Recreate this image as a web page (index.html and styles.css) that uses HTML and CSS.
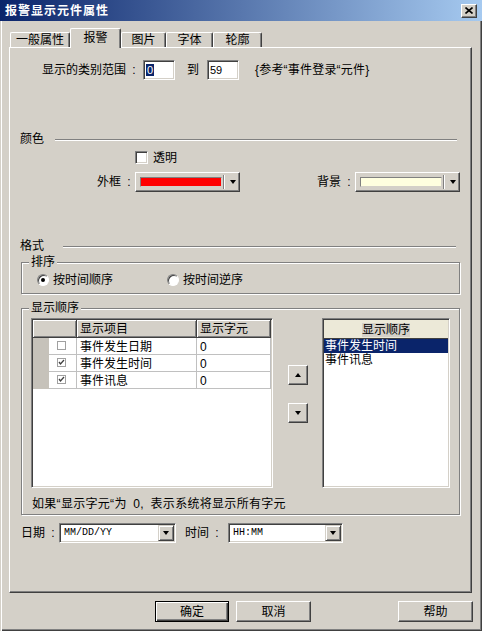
FILE: index.html
```html
<!DOCTYPE html>
<html lang="zh-CN">
<head>
    <meta charset="UTF-8">
    <meta name="viewport" content="width=device-width, initial-scale=1.0">
    <title>报警显示元件属性</title>
    <link rel="stylesheet" href="styles.css">
</head>
<body>
    <div class="window">
        <div class="titlebar">
            <span class="title">报警显示元件属性</span>
            <span class="close-btn">
                <svg width="8" height="7" viewBox="0 0 8 7"><path d="M0.5 0.5 L7.5 6.5 M7.5 0.5 L0.5 6.5" stroke="#000" stroke-width="1.6" fill="none"/></svg>
            </span>
        </div>

        <div class="tabs">
            <div class="tab tab-general">一般属性</div>
            <div class="tab tab-alarm active">报警</div>
            <div class="tab tab-image">图片</div>
            <div class="tab tab-font">字体</div>
            <div class="tab tab-outline">轮廓</div>
        </div>

        <div class="panel">
            <!-- category range -->
            <div class="range-row">
                <span class="range-label label">显示的类别范围 :</span>
                <span class="field range-field"><span class="selected-text">0</span></span>
                <span class="range-to">到</span>
                <span class="field range-field">59</span>
                <span class="range-hint">{参考“事件登录“元件}</span>
            </div>

            <div class="section-head head-color">
                <span>颜色</span>
                <div class="etched-line"></div>
            </div>

            <div class="transparent-row">
                <span class="checkbox"></span>
                <span class="check-label">透明</span>
            </div>

            <div class="color-row">
                <span class="label color-label">外框 :</span>
                <div class="color-combo">
                    <span class="swatch swatch-red"></span>
                    <span class="combo-sep"></span>
                    <span class="arrow-down"></span>
                </div>
                <span class="label color-label bg-label">背景 :</span>
                <div class="color-combo">
                    <span class="swatch swatch-cream"></span>
                    <span class="combo-sep"></span>
                    <span class="arrow-down"></span>
                </div>
            </div>

            <div class="section-head head-format">
                <span>格式</span>
                <div class="etched-line"></div>
            </div>

            <!-- sort order -->
            <div class="group sort-group">
                <span class="group-title">排序</span>
                <div class="radio-row">
                    <div class="radio-option">
                        <span class="radio checked"></span>
                        <span>按时间顺序</span>
                    </div>
                    <div class="radio-option">
                        <span class="radio"></span>
                        <span>按时间逆序</span>
                    </div>
                </div>
            </div>

            <!-- display order -->
            <div class="group order-group">
                <span class="group-title">显示顺序</span>
                <div class="order-body">
                    <div class="event-grid">
                        <div class="grid-table">
                            <div class="gh gh-corner"></div>
                            <div class="gh">显示项目</div>
                            <div class="gh">显示字元</div>

                            <div class="row-head"></div>
                            <div class="gc check-cell">
                                <svg width="9" height="9" viewBox="0 0 9 9"><rect x="0.5" y="0.5" width="8" height="8" fill="#fff" stroke="#a0a0a0"/></svg>
                            </div>
                            <div class="gc">事件发生日期</div>
                            <div class="gc">0</div>

                            <div class="row-head"></div>
                            <div class="gc check-cell">
                                <svg width="9" height="9" viewBox="0 0 9 9"><rect x="0.5" y="0.5" width="8" height="8" fill="#fff" stroke="#a0a0a0"/><path d="M2 4 L3.5 6 L7 2" stroke="#404040" stroke-width="1.3" fill="none"/></svg>
                            </div>
                            <div class="gc">事件发生时间</div>
                            <div class="gc">0</div>

                            <div class="row-head"></div>
                            <div class="gc check-cell">
                                <svg width="9" height="9" viewBox="0 0 9 9"><rect x="0.5" y="0.5" width="8" height="8" fill="#fff" stroke="#a0a0a0"/><path d="M2 4 L3.5 6 L7 2" stroke="#404040" stroke-width="1.3" fill="none"/></svg>
                            </div>
                            <div class="gc">事件讯息</div>
                            <div class="gc">0</div>
                        </div>
                    </div>

                    <div class="move-buttons">
                        <span class="small-btn"><span class="arrow-up"></span></span>
                        <span class="small-btn"><span class="arrow-down"></span></span>
                    </div>

                    <div class="order-list">
                        <div class="list-head"><span>显示顺序</span></div>
                        <div class="list-item selected">事件发生时间</div>
                        <div class="list-item">事件讯息</div>
                    </div>
                </div>
                <p class="note">如果“显示字元“为 0, 表示系统将显示所有字元</p>
            </div>

            <div class="datetime-row">
                <span class="label date-label">日期 :</span>
                <div class="drop-combo date-combo">
                    <span class="combo-text">MM/DD/YY</span>
                    <span class="drop-btn"><span class="arrow-down"></span></span>
                </div>
                <span class="label time-label">时间 :</span>
                <div class="drop-combo time-combo">
                    <span class="combo-text">HH:MM</span>
                    <span class="drop-btn"><span class="arrow-down"></span></span>
                </div>
            </div>
        </div>

        <div class="buttons">
            <span class="btn default">确定</span>
            <span class="btn btn-cancel">取消</span>
            <span class="btn btn-help">帮助</span>
        </div>
    </div>
</body>
</html>
```

FILE: styles.css
```css
/* classic dialog look */
body {
    margin: 0;
    font-family: "Liberation Sans", "Noto Sans CJK SC", sans-serif;
    font-size: 12px;
    line-height: 14px;
    color: #000;
    background-color: #d4d0c8;
    overflow: hidden;
}

.window {
    width: 482px;
    height: 631px;
    box-sizing: border-box;
    background-color: #d4d0c8;
    box-shadow: inset 1px 1px #d4d0c8, inset 2px 2px #fff, inset -1px -1px #404040, inset -2px -2px #808080;
    display: flex;
    flex-direction: column;
}

/* title bar */
.titlebar {
    height: 21px;
    display: flex;
    align-items: center;
    justify-content: space-between;
    background: linear-gradient(to right, #0a246a, #a6caf0);
}

.title {
    padding-left: 5px;
    color: #fff;
    font-weight: bold;
    letter-spacing: 1px;
}

.close-btn {
    width: 16px;
    height: 14px;
    margin-right: 5px;
    box-sizing: border-box;
    display: flex;
    align-items: center;
    justify-content: center;
    background-color: #d4d0c8;
    border: 1px solid;
    border-color: #fff #404040 #404040 #fff;
    box-shadow: inset -1px -1px #808080;
}

/* tabs */
.tabs {
    display: flex;
    align-items: flex-end;
    height: 19px;
    margin-top: 7px;
    padding-left: 10px;
}

.tab {
    height: 15px;
    box-sizing: border-box;
    text-align: center;
    background-color: #d4d0c8;
    border-top: 1px solid #fff;
    border-left: 1px solid #fff;
    border-right: 1px solid #404040;
    border-radius: 2px 2px 0 0;
    box-shadow: inset -1px 0 #808080;
}

.tab.active {
    position: relative;
    z-index: 1;
    height: 20px;
    margin-bottom: -1px;
    padding-top: 2px;
}

.tab-general { width: 60px; }
.tab-alarm { width: 51px; }
.tab-image { width: 45px; }
.tab-font { width: 47px; }
.tab-outline { width: 49px; }

.panel {
    width: 463px;
    height: 546px;
    margin-left: 9px;
    box-sizing: border-box;
    border-top: 1px solid #fff;
    border-left: 1px solid #fff;
    border-right: 1px solid #404040;
    border-bottom: 1px solid #404040;
    box-shadow: inset -1px -1px #808080;
    display: flex;
    flex-direction: column;
}

.label {
    word-spacing: 3px;
    white-space: nowrap;
}

/* sunken text field */
.field {
    height: 20px;
    box-sizing: border-box;
    background-color: #fff;
    border: 1px solid;
    border-color: #808080 #fff #fff #808080;
    box-shadow: inset 1px 1px #404040, inset -1px -1px #d4d0c8;
    padding: 3px 2px 0;
    font-size: 11px;
    line-height: 13px;
}

.range-row {
    display: flex;
    align-items: center;
    height: 20px;
    margin-top: 12px;
    padding-left: 32px;
}

.range-label {
    width: 101px;
}

.range-field {
    width: 32px;
}

.selected-text {
    background-color: #0a246a;
    color: #fff;
    padding: 0 1px;
}

.range-to {
    margin-left: 12px;
    width: 20px;
}

.range-hint {
    margin-left: 16px;
    letter-spacing: 0.2px;
}

/* section headings with etched rule */
.section-head {
    display: flex;
    align-items: center;
    height: 14px;
    padding-left: 10px;
}

.etched-line {
    flex: 1;
    height: 0;
    margin-top: 1px;
    border-top: 1px solid #808080;
    border-bottom: 1px solid #fff;
}

.head-color {
    margin-top: 52px;
}

.head-color .etched-line {
    margin-left: 11px;
    margin-right: 14px;
}

.head-format {
    margin-top: 47px;
}

.head-format .etched-line {
    margin-left: 19px;
    margin-right: 15px;
}

.transparent-row {
    display: flex;
    align-items: center;
    height: 13px;
    margin-top: 5px;
    padding-left: 125px;
}

.checkbox {
    width: 13px;
    height: 13px;
    box-sizing: border-box;
    background-color: #fff;
    border: 1px solid;
    border-color: #808080 #fff #fff #808080;
    box-shadow: inset 1px 1px #404040, inset -1px -1px #d4d0c8;
}

.check-label {
    margin-left: 5px;
}

.color-row {
    display: flex;
    align-items: center;
    height: 20px;
    margin-top: 8px;
    padding-left: 87px;
}

.color-label {
    width: 38px;
}

.bg-label {
    margin-left: 77px;
}

.color-combo {
    width: 105px;
    height: 20px;
    box-sizing: border-box;
    display: flex;
    align-items: center;
    padding-left: 4px;
    border: 1px solid;
    border-color: #fff #404040 #404040 #fff;
    box-shadow: inset -1px -1px #808080;
}

.swatch {
    width: 82px;
    height: 10px;
    box-sizing: border-box;
    border: 1px solid;
    border-color: #808080 #d4d0c8 #d4d0c8 #808080;
}

.swatch-red {
    background-color: #ff0000;
}

.swatch-cream {
    background-color: #ffffdf;
}

.combo-sep {
    width: 0;
    height: 14px;
    margin-left: 1px;
    border-left: 1px solid #808080;
    border-right: 1px solid #fff;
}

.color-combo .arrow-down {
    margin-left: 5px;
}

.arrow-down,
.arrow-up {
    width: 0;
    height: 0;
    border-left: 3.5px solid transparent;
    border-right: 3.5px solid transparent;
}

.arrow-down {
    border-top: 4px solid #000;
}

.arrow-up {
    border-bottom: 4px solid #000;
}

/* group boxes */
.group {
    position: relative;
    margin: 0 11px;
    box-sizing: border-box;
    border: 1px solid #808080;
    box-shadow: inset 1px 1px #fff, 1px 1px #fff;
}

.group-title {
    position: absolute;
    top: -8px;
    left: 7px;
    padding: 0 2px;
    background-color: #d4d0c8;
}

.sort-group {
    height: 32px;
    margin-top: 9px;
}

.radio-row {
    display: flex;
    align-items: center;
    height: 13px;
    margin-top: 10px;
    padding-left: 15px;
}

.radio-option {
    display: flex;
    align-items: center;
    width: 130px;
}

.radio-option span + span {
    margin-left: 4px;
}

.radio {
    position: relative;
    width: 12px;
    height: 12px;
    box-sizing: border-box;
    border-radius: 50%;
    background-color: #fff;
    border: 1px solid;
    border-color: #808080 #fff #fff #808080;
    box-shadow: inset 1px 1px #404040;
}

.radio.checked::after {
    content: "";
    position: absolute;
    left: 3px;
    top: 3px;
    width: 4px;
    height: 4px;
    border-radius: 50%;
    background-color: #000;
}

.order-group {
    height: 207px;
    margin-top: 14px;
}

.order-body {
    display: flex;
    padding: 9px 0 0 9px;
}

.event-grid,
.order-list {
    height: 170px;
    box-sizing: border-box;
    background-color: #fff;
    border: 1px solid;
    border-color: #808080 #fff #fff #808080;
    box-shadow: inset 1px 1px #404040, inset -1px -1px #d4d0c8;
    padding: 1px;
}

.event-grid {
    width: 242px;
}

.grid-table {
    display: grid;
    grid-template-columns: 16px 28px 120px 74px;
    grid-template-rows: 18px;
    grid-auto-rows: 17px;
}

.gh {
    box-sizing: border-box;
    padding: 2px 0 0 3px;
    background-color: #d4d0c8;
    border-right: 1px solid #404040;
    border-bottom: 1px solid #404040;
    box-shadow: inset 1px 1px #fff, inset -1px -1px #808080;
}

.gh-corner {
    grid-column: span 2;
}

.row-head {
    background-color: #c6c2ba;
    border-bottom: 1px solid #c6c2ba;
}

.gc {
    box-sizing: border-box;
    padding: 2px 0 0 3px;
    border-right: 1px solid #c0c0c0;
    border-bottom: 1px solid #c0c0c0;
}

.check-cell {
    padding: 3px 0 0 8px;
    line-height: 0;
}

.move-buttons {
    display: flex;
    flex-direction: column;
    margin-left: 15px;
    padding-top: 47px;
    gap: 18px;
}

.small-btn {
    width: 20px;
    height: 20px;
    box-sizing: border-box;
    display: flex;
    align-items: center;
    justify-content: center;
    border: 1px solid;
    border-color: #fff #404040 #404040 #fff;
    box-shadow: inset -1px -1px #808080;
}

.order-list {
    width: 128px;
    margin-left: 14px;
}

.list-head {
    height: 19px;
    box-sizing: border-box;
    padding-top: 3px;
    text-align: center;
    background-color: #ece9d8;
    border-bottom: 1px solid #404040;
}

.list-head span {
    background-color: #d4d0c8;
}

.list-item {
    height: 14px;
    padding-left: 1px;
}

.list-item.selected {
    background-color: #0a246a;
    color: #fff;
}

.note {
    margin: 9px 0 0 10px;
    word-spacing: 3px;
    letter-spacing: 0.3px;
}

/* date and time format */
.datetime-row {
    display: flex;
    align-items: center;
    height: 20px;
    margin-top: 8px;
    padding-left: 11px;
}

.date-label {
    width: 38px;
}

.time-label {
    width: 43px;
    margin-left: 9px;
}

.drop-combo {
    height: 20px;
    box-sizing: border-box;
    display: flex;
    align-items: center;
    padding: 1px;
    background-color: #fff;
    border: 1px solid;
    border-color: #808080 #fff #fff #808080;
    box-shadow: inset 1px 1px #404040, inset -1px -1px #d4d0c8;
}

.date-combo {
    width: 117px;
}

.time-combo {
    width: 115px;
}

.combo-text {
    flex: 1;
    padding-left: 3px;
    font-family: "Liberation Mono", monospace;
    font-size: 10px;
}

.drop-btn {
    width: 16px;
    height: 16px;
    box-sizing: border-box;
    display: flex;
    align-items: center;
    justify-content: center;
    background-color: #d4d0c8;
    border: 1px solid;
    border-color: #d4d0c8 #404040 #404040 #d4d0c8;
    box-shadow: inset 1px 1px #fff, inset -1px -1px #808080;
}

/* bottom buttons */
.buttons {
    display: flex;
    margin-top: 8px;
    padding-left: 155px;
}

.btn {
    width: 75px;
    height: 21px;
    box-sizing: border-box;
    padding-top: 3px;
    text-align: center;
    border: 1px solid;
    border-color: #fff #404040 #404040 #fff;
    box-shadow: inset -1px -1px #808080;
}

.btn.default {
    width: 74px;
    border-color: #000;
    box-shadow: inset 1px 1px #fff, inset -1px -1px #404040, inset -2px -2px #808080;
}

.btn-cancel {
    margin-left: 7px;
}

.btn-help {
    margin-left: 87px;
}
```
